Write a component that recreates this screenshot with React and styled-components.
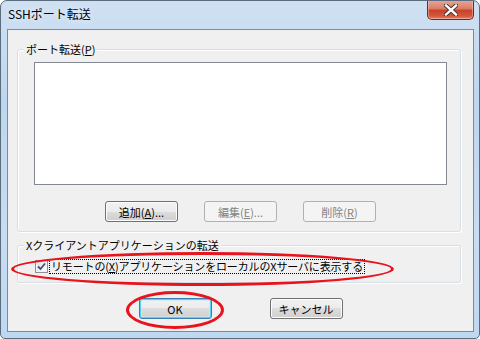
import React from 'react';
import styled, { createGlobalStyle } from 'styled-components';

const GlobalStyle = createGlobalStyle`
  html, body {
    margin: 0;
    padding: 0;
    background: #ffffff;
  }
  body {
    font-family: "Noto Sans CJK JP", "Liberation Sans", sans-serif;
  }
`;

const Window = styled.div`
  position: relative;
  width: 480px;
  height: 339px;
  box-sizing: border-box;
  display: flex;
  flex-direction: column;
  border: 1px solid #5b6c7d;
  border-radius: 7px 7px 5px 5px;
  background: linear-gradient(180deg, #cfe0f2 0%, #bed6ef 30%, #c8dcf3 70%, #bfd8f2 100%);
  overflow: hidden;
`;

const TitleBar = styled.div`
  height: 28px;
  display: flex;
  align-items: flex-start;
  flex-shrink: 0;
`;

const Title = styled.span`
  margin: 5px 0 0 7px;
  font-size: 12px;
  line-height: 16px;
  color: #000;
  text-shadow: 0 0 6px rgba(255, 255, 255, 0.9);
`;

const CloseButton = styled.div`
  margin-left: auto;
  margin-right: 5px;
  margin-top: -1px;
  width: 47px;
  height: 20px;
  box-sizing: border-box;
  border: 1px solid #6e2a1f;
  border-top: none;
  border-radius: 0 0 5px 5px;
  background: linear-gradient(180deg, #e9a899 0%, #dd7b66 45%, #c8432a 55%, #d4573d 85%, #e08a70 100%);
  box-shadow: inset 0 0 0 1px rgba(255, 210, 200, 0.45);
  display: flex;
  align-items: center;
  justify-content: center;
`;

const Client = styled.div`
  flex: 1;
  margin: 0 5px 6px 6px;
  border: 1px solid #7d8b99;
  background: #f0f0f0;
  display: flex;
  flex-direction: column;
  align-items: flex-start;
`;

const Group = styled.div`
  position: relative;
  box-sizing: border-box;
  width: 444px;
  height: ${p => p.$height}px;
  margin: ${p => p.$top}px 0 0 9px;
  padding: ${p => p.$pad};
  border: 1px solid #d5dfe5;
  border-radius: 3px;
  box-shadow: 1px 1px 0 #ffffff, inset 1px 1px 0 #ffffff;
`;

const GroupLabel = styled.span`
  position: absolute;
  top: -8px;
  left: 6px;
  padding: 0 2px;
  background: #f0f0f0;
  font-size: 11px;
  line-height: 14px;
  color: #000;
`;

const Key = styled.span`
  text-decoration: underline;
`;

const ListBox = styled.div`
  box-sizing: border-box;
  width: 413px;
  height: 123px;
  background: #ffffff;
  border: 1px solid #828790;
`;

const ButtonRow = styled.div`
  display: flex;
  justify-content: center;
  gap: ${p => p.$gap}px;
  width: ${p => p.$width};
  margin-top: ${p => p.$top}px;
`;

const Button = styled.div`
  box-sizing: border-box;
  width: 73px;
  height: 21px;
  display: flex;
  align-items: center;
  justify-content: center;
  font-size: 11px;
  border-radius: 3px;
  border: 1px solid ${p => (p.$default ? '#3c7fb1' : p.$disabled ? '#adb2b5' : '#707070')};
  color: ${p => (p.$disabled ? '#838383' : '#000')};
  background: ${p =>
    p.$disabled
      ? '#f4f4f4'
      : 'linear-gradient(180deg, #f2f2f2 0%, #ebebeb 50%, #dddddd 50%, #cfcfcf 100%)'};
  box-shadow: ${p =>
    p.$default
      ? 'inset 0 0 0 1px #58d0f5, inset 0 0 0 2px rgba(200, 236, 250, 0.6)'
      : p.$disabled
      ? 'none'
      : 'inset 0 0 0 1px #fcfcfc'};
`;

const CheckRow = styled.div`
  display: flex;
  align-items: center;
  gap: 1px;
`;

const CheckBox = styled.div`
  width: 13px;
  height: 13px;
  box-sizing: border-box;
  border: 1px solid #8f8f8f;
  background: linear-gradient(135deg, #dcdcdc 0%, #ffffff 100%);
  box-shadow: inset 0 0 0 1px #f4f4f4;
  display: flex;
  align-items: center;
  justify-content: center;
`;

const CheckLabel = styled.span`
  font-size: 11px;
  line-height: 13px;
  padding: 0 1px;
  border: 1px dotted #000;
  color: #000;
  letter-spacing: -0.15px;
`;

const Footer = styled.div`
  align-self: stretch;
  display: flex;
  justify-content: center;
  gap: 58px;
  margin-top: 15px;
`;

const Ellipse = styled.div`
  position: absolute;
  left: ${p => p.$x}px;
  top: ${p => p.$y}px;
  width: ${p => p.$w}px;
  height: ${p => p.$h}px;
  box-sizing: border-box;
  border: 3px solid #e8131c;
  border-radius: 50%;
  pointer-events: none;
`;

export default function App() {
  return (
    <>
      <GlobalStyle />
      <Window>
        <TitleBar>
          <Title>SSHポート転送</Title>
          <CloseButton>
            <svg width="14" height="12" viewBox="0 0 14 12">
              <path
                d="M2 1.5 L12 10.5 M12 1.5 L2 10.5"
                stroke="#3a2a2a"
                strokeWidth="4.2"
                strokeLinecap="square"
              />
              <path
                d="M2 1.5 L12 10.5 M12 1.5 L2 10.5"
                stroke="#ffffff"
                strokeWidth="2.4"
                strokeLinecap="square"
              />
            </svg>
          </CloseButton>
        </TitleBar>
        <Client>
          <Group $top={19} $height={183} $pad="12px 0 0 16px">
            <GroupLabel>
              ポート転送(<Key>P</Key>)
            </GroupLabel>
            <ListBox />
            <ButtonRow $gap={26} $width="413px" $top={16}>
              <Button>
                追加(<Key>A</Key>)...
              </Button>
              <Button $disabled>
                編集(<Key>E</Key>)...
              </Button>
              <Button $disabled>
                削除(<Key>R</Key>)
              </Button>
            </ButtonRow>
          </Group>
          <Group $top={13} $height={38} $pad="13px 0 0 17px">
            <GroupLabel>Xクライアントアプリケーションの転送</GroupLabel>
            <CheckRow>
              <CheckBox>
                <svg width="9" height="9" viewBox="0 0 9 9">
                  <path
                    d="M1 4.5 L3.5 7 L8 1.5"
                    fill="none"
                    stroke="#3d4f8c"
                    strokeWidth="1.8"
                  />
                </svg>
              </CheckBox>
              <CheckLabel>
                リモートの(<Key>X</Key>)アプリケーションをローカルのXサーバに表示する
              </CheckLabel>
            </CheckRow>
          </Group>
          <Footer>
            <Button $default>OK</Button>
            <Button>キャンセル</Button>
          </Footer>
        </Client>
        <Ellipse $x={10} $y={251} $w={383} $h={34} />
        <Ellipse $x={125} $y={290} $w={98} $h={38} />
      </Window>
    </>
  );
}
